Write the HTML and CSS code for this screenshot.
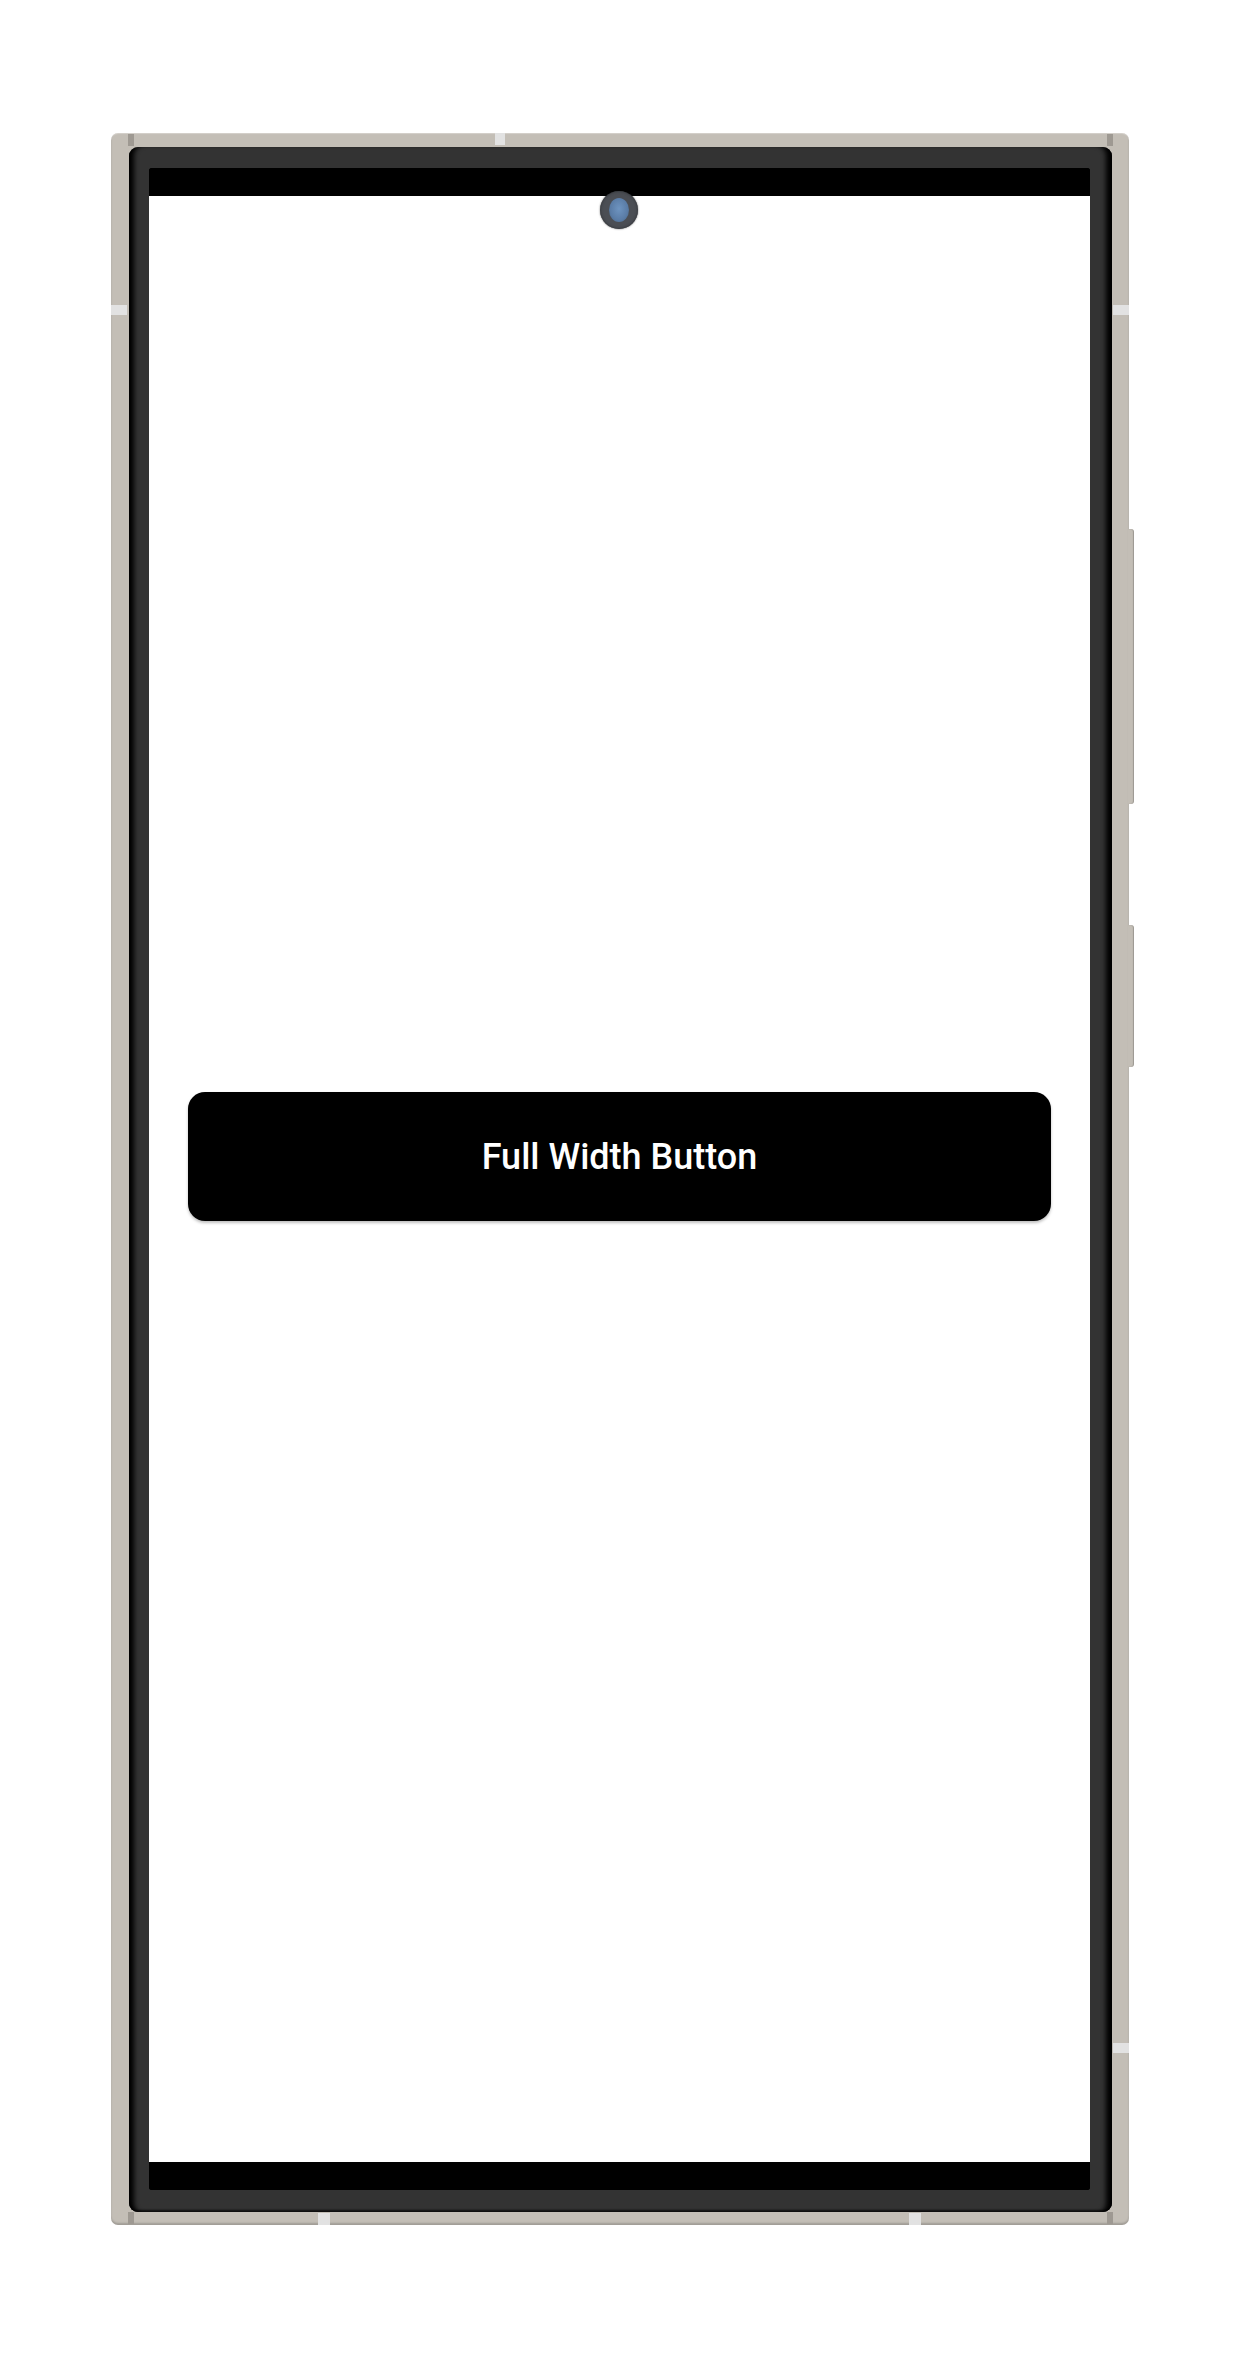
FILE: index.html
```html
<!DOCTYPE html>
<html>
<head>
<meta charset="utf-8">
<link rel="stylesheet" href="styles.css">
</head>
<body>
<div class="phone">
  <span class="mark mark-top"></span>
  <span class="mark mark-left"></span>
  <span class="mark mark-right"></span>
  <span class="mark mark-right2"></span>
  <span class="mark mark-bottom1"></span>
  <span class="mark mark-bottom2"></span>
  <span class="side-btn side-btn-1"></span>
  <span class="side-btn side-btn-2"></span>
  <span class="corner corner-tl"></span>
  <span class="corner corner-tr"></span>
  <span class="corner corner-bl"></span>
  <span class="corner corner-br"></span>
  <div class="bezel">
    <div class="screen">
      <div class="band"></div>
      <div class="content">
        <button class="full-btn">Full Width Button</button>
      </div>
      <div class="band"></div>
      <div class="camera"><div class="lens"></div></div>
    </div>
  </div>
</div>
</body>
</html>
```

FILE: styles.css
```css
html, body {
  margin: 0;
  padding: 0;
  background: #ffffff;
}
body {
  width: 1245px;
  height: 2359px;
  font-family: Roboto, "Noto Sans", sans-serif;
}
.phone {
  position: relative;
  margin-left: 111px;
  margin-top: 133px;
  width: 1018px;
  height: 2092px;
  box-sizing: border-box;
  padding: 14px 17px 13px 18px;
  background: #c3beb6;
  border-radius: 7px;
  box-shadow: inset 0 -2px 2px rgba(0,0,0,0.18), inset 0 1px 1px rgba(255,255,255,0.3);
}
.bezel {
  height: 100%;
  box-sizing: border-box;
  padding: 21px 22px 22px 20px;
  background: #333333;
  border-radius: 9px;
  box-shadow: inset 8px 0 5px -3px #000, inset -9px 0 5px -3px #000, inset 0 -2px 2px #111;
}
.screen {
  position: relative;
  height: 100%;
  display: flex;
  flex-direction: column;
  background: #000;
  border-radius: 3px;
  overflow: hidden;
}
.band {
  height: 28px;
  background: #000;
  flex: none;
}
.content {
  flex: 1;
  background: #ffffff;
  display: flex;
  align-items: center;
  padding: 0 39px 0 39px;
}
.full-btn {
  width: 100%;
  height: 129px;
  margin-bottom: 45px;
  border: none;
  border-radius: 17px;
  background: #000;
  color: #fff;
  font-family: Roboto, "Noto Sans", sans-serif;
  font-weight: 500;
  font-size: 36px;
  box-shadow: 0 2px 3px rgba(0,0,0,0.25);
  padding: 0;
}
.camera {
  position: absolute;
  left: 451px;
  top: 23px;
  width: 38px;
  height: 38px;
  border-radius: 50%;
  background: #4b4e54;
  box-shadow: 0 0 2px rgba(0,0,0,0.6), inset 0 0 3px #2a2c30;
  display: flex;
  align-items: center;
  justify-content: center;
}
.lens {
  width: 20px;
  height: 24px;
  border-radius: 50%;
  background: radial-gradient(ellipse at 50% 45%, #6e94c0 0%, #5a7ca6 60%, #45627f 100%);
}
.mark {
  position: absolute;
  background: #e2e2e2;
}
.mark-top { left: 384px; top: 0; width: 10px; height: 12px; }
.mark-left { left: 0; top: 172px; width: 16px; height: 10px; }
.mark-right { right: 0; top: 172px; width: 16px; height: 10px; }
.mark-right2 { right: 0; top: 1910px; width: 16px; height: 10px; }
.mark-bottom1 { left: 207px; bottom: 0; width: 12px; height: 12px; }
.mark-bottom2 { left: 798px; bottom: 0; width: 12px; height: 12px; }
.side-btn {
  position: absolute;
  right: -5px;
  width: 6px;
  background: #c3beb6;
  border-radius: 0 3px 3px 0;
  box-shadow: inset -1px 0 1px rgba(0,0,0,0.2);
}
.side-btn-1 { top: 396px; height: 275px; }
.side-btn-2 { top: 792px; height: 142px; }
.corner {
  position: absolute;
  width: 6px;
  height: 12px;
  background: #9e9992;
}
.corner-tl { left: 17px; top: 1px; }
.corner-tr { right: 16px; top: 1px; }
.corner-bl { left: 17px; bottom: 1px; }
.corner-br { right: 16px; bottom: 1px; }
```
